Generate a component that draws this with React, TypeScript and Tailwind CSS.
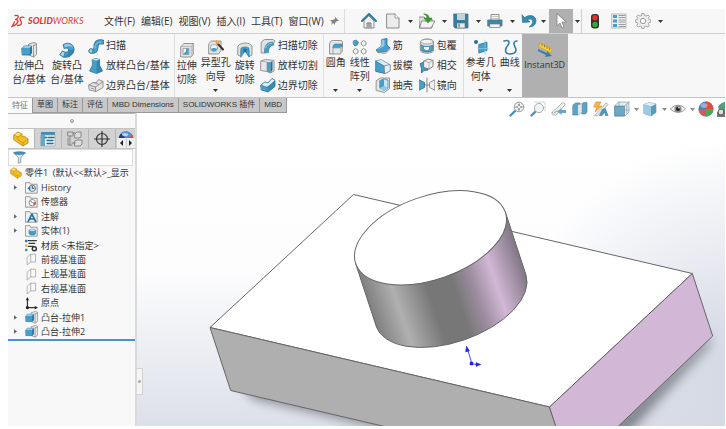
import type { ReactNode } from 'react'

function Icon({ children, size = 'size-4' }: { children: ReactNode; size?: string }) {
  return (
    <svg viewBox="0 0 16 16" className={`${size} shrink-0`} fill="none" strokeLinejoin="round" strokeLinecap="round" aria-hidden="true">
      {children}
    </svg>
  )
}

const B = '#459fc9'
const D = '#236f96'
const L = '#8fcbe6'
const G = '#dcdcdc'
const K = '#8a8a8a'

const icons = {
  extrude: <><path d="M8 2l5-1.500 2.500 1v11l-3 2.500L8 13z" fill="#e6e6e6" stroke={K} strokeWidth=".9" /><path d="M12.500 3.500V15M12.500 3.500l3-1" stroke={K} strokeWidth=".8" /><path d="M1 6l2-2h7.500v7L9 13H1.500z" fill={B} stroke={D} strokeWidth=".8" /><path d="M1 6l2-2h7.500L9 6z" fill={L} /><path d="M9 6l1.500-2v7L9 13z" fill={D} /></>,
  revolve: <><path d="M4.500 2.500C10-1 15.500 3 15 8s-5.500 8-10.500 7L1 12.500 3.500 9c3 2 6 1.500 6-1 0-2-2-2.500-4-1.500z" fill={B} stroke={D} strokeWidth=".9" /><path d="M5 3c4-2.500 8-.5 9 2.500-3-2-5-1.500-8 0z" fill={L} /><path d="M9.500 8c2 0 4 0 5.500 0-.5 4-5 7-10 6.500 3-1 5-3 4.500-6.500z" fill={D} opacity=".55" /><path d="M1 12.500L3.500 9l2.500 1.500L4.500 15z" fill="#a9d7ec" stroke={D} strokeWidth=".6" /></>,
  sweep: <><path d="M3 13c4 1 5-1 5-4s1-6 6-5" stroke={D} strokeWidth="5" /><path d="M3 13c4 1 5-1 5-4s1-6 6-5" stroke={B} strokeWidth="3.600" /><path d="M7 10c0-4 2-6 6-6" stroke={L} strokeWidth="1" /><ellipse cx="3" cy="13" rx="2" ry="2.200" fill="#a9d7ec" stroke={D} strokeWidth=".7" /></>,
  loft: <><path d="M4.500 1.500L8 .5l3.500 1v5.500l3 6L8.500 15.500 1.500 13l3-6z" fill={B} stroke={D} strokeWidth=".7" /><path d="M4.500 1.500L8 .5l3.500 1-3 1.200z" fill="#bfe3f2" /><path d="M8.500 3v12.500l6-2.500-3-6V1.500z" fill={D} opacity=".5" /></>,
  boundary: <><path d="M1 8l4-2.500 3 .5 2.500-3.500 4.500 2v6L8 14.500 1.500 13z" fill="#e4e4e4" stroke={K} strokeWidth=".9" /><path d="M1 8l6.500 2L15 4.500M7.500 10v4.500M5 5.500L8 6l2.500 1.500M3 11l3 1" stroke={K} strokeWidth=".9" /></>,
  cut: <><path d="M2 4.500L5 1.500h9.500V12L12 15H2z" fill="#e2e2e2" stroke={K} strokeWidth=".9" /><path d="M12 4.500V15l2.500-3V1.500z" fill="#c2c2c2" /><path d="M2 4.500h10l2.500-3" stroke="#aaa" strokeWidth=".7" /><rect x="4.500" y="6.500" width="5.500" height="6" fill="#fff" stroke={K} strokeWidth=".7" /><path d="M4.800 12.200V11L7 9.500V6.800h2.700v5.400z" fill={B} /></>,
  hole: <><path d="M1 4.500L3.500 2H13v9.500L10.500 15H1z" fill="#e2e2e2" stroke={K} strokeWidth=".9" /><circle cx="6" cy="9" r="3.600" fill="#eef7fb" stroke={K} strokeWidth=".6" /><path d="M2.800 10c2-1.500 4.400-1.500 6.400 0-1 3-5.400 3-6.400 0z" fill={B} /><path d="M9.500 4.500l5.500 6" stroke="#333" strokeWidth="2" /><path d="M7 3l1.500-2 1.200 1.500L12 2l-.8 2.200L9.500 5.500z" fill="#f0a43a" /></>,
  revcut: <><path d="M1 4c2-4 12-4 14 0v9l-3 1.500V8H4v6.500L1 13z" fill="#e2e2e2" stroke={K} strokeWidth=".9" /><path d="M4 6c2-1.500 6-1.500 8 0v9l-2.500-3.500V7h-3v4.500L4 15z" fill={B} stroke={D} strokeWidth=".5" /><path d="M6.500 7h3v4.500L8 10l-1.500 1.500z" fill={D} /></>,
  sweepcut: <><path d="M1.500 4l3-2.500H13l2 1.500-2 3-3.500 2L6 15H1.500z" fill="#e2e2e2" stroke={K} strokeWidth=".9" /><path d="M4.500 14c0-7 2.500-9.500 8-10l1.500 3c-4 .5-5.500 3-5.500 7.500z" fill={B} stroke={D} strokeWidth=".6" /><path d="M5.500 10c1-3 3-4.500 6.500-5" stroke={L} /></>,
  loftcut: <><path d="M1 3l4.500-1.500L14 2.500V13l-3.500 2-3.500-1.500L1 12.500z" fill="#e6e6e6" stroke={K} strokeWidth=".9" /><path d="M7 4h3.500v11L7 13.500z" fill={B} /><path d="M10.500 4l2-1v9l-2 3z" fill={D} /><path d="M1 3l6 1v9" stroke={K} strokeWidth=".6" /></>,
  boundcut: <><path d="M1 8l4-3 3 1 4-4.500 3 2v6L8 15l-6.500-2z" fill={B} stroke={D} strokeWidth=".8" /><path d="M1 8l4-3 3 1 4-4.500 3 2-5 4.500-3 2z" fill="#e4eff4" stroke={D} strokeWidth=".5" /><path d="M7.500 10v5L15 9.500v-6L10 8z" fill={D} opacity=".4" /></>,
  fillet: <><path d="M1.500 5.500c0-2.500 1.500-4 4-4h8l1 1.500v9.500L12 15H2z" fill="#e6e6e6" stroke={K} strokeWidth=".9" /><path d="M5 8.500c0-2 .5-3.500 2.500-3.500H14v3.500z" fill={B} stroke={D} strokeWidth=".5" /><path d="M5 8.500h7.500V15M5 8.500V15" stroke={K} strokeWidth=".7" /><path d="M12.500 8.500l2-1v5.200l-2.200 2z" fill="#c6c6c6" /></>,
  pattern: <><path d="M1.500 2L4 1l2.500 2-1 3-2.500 1-1.500-1.500z" fill={B} stroke={D} strokeWidth=".6" />{['M9.500 3l2-1.500L14 3v2.500L11.500 7l-2-1.500z', 'M1.500 11l2-1.500L6 11v2.500L3.500 15l-2-1.500z', 'M9.500 11l2-1.500L14 11v2.500L11.500 15l-2-1.500z'].map(d => <path key={d} d={d} fill="#f0f0f0" stroke={K} strokeWidth=".9" />)}</>,
  rib: <><path d="M7 1.500L12 .5V7l3 3-4 4-8 .5L1 12l5-3.500z" fill={B} stroke={D} strokeWidth=".8" /><path d="M7 1.500l2.500.5v6L3.500 11 1 12l5-3.500z" fill={L} /><path d="M3 14.500l8-.5 4-4v1.500L11 15.500z" fill={G} stroke={K} strokeWidth=".6" /></>,
  draft: <><path d="M1 3l8.500 4L15 6.500V13l-5 2.500L1 13.500z" fill={B} stroke={D} strokeWidth=".8" /><path d="M1 3l5-1.500 9 5L9.500 8z" fill="#dfebf0" stroke={D} strokeWidth=".5" /><path d="M9.500 8L15 6.500V13l-5 2.500z" fill="#eaf0f2" stroke={K} strokeWidth=".6" /></>,
  shell: <><path d="M1.500 3.500l4-2.500h9v10.500l-5 4-8-2z" fill="#e4e4e4" stroke={K} strokeWidth=".9" /><path d="M5 3.500L9 2l4 1v8l-4 2-4-2z" fill="#c5e5f2" stroke={D} strokeWidth=".6" /><path d="M9 2v7l4 2-4 3-4-3V3.500z" fill={B} /><path d="M9 9l4 2-4 3-4-3z" fill={L} /></>,
  wrap: <><path d="M1.500 3.500c1.500-3.500 11.500-3.500 13 0v9.500c-2 3-11 3-13 0z" fill={G} stroke={K} strokeWidth=".9" /><ellipse cx="8" cy="3.600" rx="6.300" ry="2.200" fill="#f4f4f4" stroke={K} strokeWidth=".6" /><path d="M2.500 7c3 2 8 2 11 0v5.500c-3 2-8 2-11 0z" fill={B} stroke={D} strokeWidth=".6" /><path d="M5 9h5v2c-1 1.500-3 1.500-5 0z" fill="#fff" /></>,
  intersect: <><path d="M1.500 5.500L5 4l4 3v5l-4 .5-2.500 2.500v-4z" fill={B} stroke={D} strokeWidth=".9" /><path d="M5 3l4-2 5 1.500v6L10 11 5 9.500z" fill="#f2f2f2" stroke="#777" strokeWidth=".9" /><path d="M5 3l5 1.500 4-2M10 4.500V11" stroke={K} strokeWidth=".6" /></>,
  mirror: <><path d="M.5 3l5 2.500v5l-5 2.500z" fill={B} stroke={D} strokeWidth=".8" /><path d="M5.500 8h5M8 1v14" stroke="#777" strokeWidth=".9" /><path d="M15.500 3l-5 2.500v5l5 2.500z" fill="#eee" stroke={K} strokeWidth=".9" /></>,
  refgeo: <><circle cx="3" cy="3" r="2" fill={D} /><path d="M6 5.500L14 3v8.500L6 14z" fill={B} stroke={D} strokeWidth=".7" /><path d="M12 1v14M5 9.500h10" stroke={L} strokeWidth=".7" /></>,
  curve: <path d="M2 2c5-1.500 6 1 4 4-4 5-3 9 2 9 6 0 7-4 5-7-2-4-1-6 2-6" stroke="#337fa9" strokeWidth="1.600" />,
  instant: <><path d="M3 1l12 6-1 4L2 5z" fill="#f7cf38" stroke="#c79b20" strokeWidth=".6" /><path d="M5 2v2M7.500 3v2M10 4.500v2M12.500 6v2" stroke="#8d6b11" strokeWidth=".7" /><path d="M1 7l9 4V9l5 5-7 1 1-2-8-4z" fill="#337fb0" /></>,
  home: <><path d="M3 8v7h10V8L8 3z" fill="#f2f2f2" stroke="#777" strokeWidth=".8" /><path d="M6 15v-5h4v5M8 10v5" fill="#ccc" stroke="#777" strokeWidth=".9" /><path d="M1 8l7-7 7 7" stroke="#2a79a0" strokeWidth="2" /></>,
  doc: <><path d="M2 1h8l4 4v10H2z" fill="#ececec" stroke="#8b8b8b" /><path d="M10 1v4h4" fill="#fff" stroke="#8b8b8b" strokeWidth=".8" /></>,
  open: <><path d="M0 4h5l2 2h6v9H1z" fill="#ddd" stroke="#777" strokeWidth=".8" /><path d="M3 8h13l-4 7H1z" fill="#f3f3f3" stroke="#777" strokeWidth=".8" /><path d="M5 1c4 0 5 2 5 4h3l-4 5-4-5h3c0-2-1-3-3-4z" fill="#3b9b2b" stroke="#237618" strokeWidth=".5" /></>,
  save: <><path d="M1 1h14v14H2l-1-1z" fill="#347f9f" stroke="#536e7a" strokeWidth=".8" /><path d="M4 1h8v6H4z" fill="#c5d3d9" /><path d="M4 10h8v5H4z" fill="#e7e7e7" stroke="#566" strokeWidth=".5" /><path d="M6 11v3" stroke="#456" /></>,
  print: <><path d="M4 7V1.500h8V7" fill="#f6f6f6" stroke="#777" strokeWidth=".8" /><path d="M1 7h14v6H1z" fill="#348cad" stroke="#566f7a" strokeWidth=".8" /><path d="M3 11h10v3.500H3z" fill="#f5f5f5" stroke="#777" strokeWidth=".7" /><path d="M5 3.500h6M5 5.500h6" stroke="#aaa" strokeWidth=".6" /></>,
  undo: <path d="M1 2l.5 7.500L9 9 6.500 6.800C10 5 12 7 11.500 9.500c-.3 1.800-1.500 3-3.500 4.500 4.500 0 7-2.500 7-6.500C15 3 9 .5 3.800 4.500z" fill="#348caf" stroke="#216f91" strokeWidth=".6" />,
  cursor: <path d="M4 1v12l3-3 2 5 2-1-2-5h4z" fill="#fff" stroke="#838383" strokeWidth=".8" />,
  light: <><rect x="4" y="1" width="8" height="14.500" rx="3" fill="#343434" /><circle cx="8" cy="4.800" r="2.700" fill="#e93025" /><circle cx="8" cy="11.500" r="2.700" fill="#36a93a" /></>,
  list: <><path d="M1 1h14v14H1z" fill="#eee" stroke="#999" strokeWidth=".6" /><path d="M2 2h4v3H2zM2 6.500h4v3H2zM2 11h4v3H2z" fill={B} /><path d="M8 2.500h6M8 4.500h6M8 7h6M8 9h6M8 11.500h6M8 13.500h6" stroke="#888" strokeWidth=".8" /></>,
  gear: <><path d="M7 .5h2l.5 2 1.500.6L13 2l1.400 1.500-1.100 1.800.6 1.200 2 .5v2l-2 .5-.6 1.300 1.100 1.800-1.500 1.400-1.800-1-1.600.6L9 15.500H7l-.5-1.900-1.400-.6-1.900 1-1.500-1.400 1.100-1.800L2.200 9.500l-2-.5V7l2-.5.6-1.200L1.700 3.500 3.200 2l1.900 1.100L6.500 2.500z" fill="#eee" stroke="#9a9a9a" strokeWidth=".9" /><circle cx="8" cy="8" r="2.700" fill="#fff" stroke="#9a9a9a" /></>,
  zoomfit: <><path d="M1.500 14.500L6 10" stroke="#4c90b8" strokeWidth="2.400" /><circle cx="10" cy="6" r="4.800" fill="#eef1f2" stroke="#9a9a9a" /><path d="M10 3v1.500M10 7.500V9M7 6h1.500M11.500 6H13" stroke="#666" strokeWidth="1.200" /></>,
  zoomarea: <><path d="M1.500 14.500L5.500 10.500" stroke="#4c90b8" strokeWidth="2.400" /><circle cx="9" cy="7" r="4.600" fill="#eef4f6" stroke="#adadad" /><path d="M5 1h10v9" stroke="#bbb" strokeWidth=".8" strokeDasharray="2 1.500" /></>,
  prev: <><path d="M1 12c0-2 3-3 5-5l5-5c2-1 4 1 2 3l-6 7c-2 3-6 3-6 0z" fill="#f0f0f0" stroke="#aaa" strokeWidth=".9" /><path d="M3 12l3-2" stroke="#999" /><path d="M6 10.500L10.500 7v2H15v3h-4.500v2z" fill="#6aa6c4" /></>,
  section: <><path d="M1 4l2.500-2H8v9.500L6 14H1z" fill="#5da3c4" stroke="#4a7f9a" strokeWidth=".6" /><path d="M10 3l1.500-1.500H15V11l-1.500 2H10z" fill="#5da3c4" stroke="#4a7f9a" strokeWidth=".6" /><path d="M6 4l4-1.500v9L6 14z" fill="#e3e8ea" stroke="#999" strokeWidth=".5" /></>,
  annview: <><path d="M3 1h5L5.500 5H9l-7 6 2-5H1z" fill="#f8b743" stroke="#e08a3a" strokeWidth=".7" /><path d="M13.500 2L15 3.500 4.500 15 2 14.500z" fill="#e6e6e6" stroke="#999" strokeWidth=".7" /><path d="M9 8l3.500-1L15.500 15h-3L11.500 12 9 15H6z" fill="#5096b9" /></>,
  orient: <><path d="M1 4.500L4.500 1H15v10l-4 4H1z" fill="#e3edf1" stroke="#8c9aa0" strokeWidth=".7" /><path d="M1 5h9.500v10H1z" fill="#69a9c5" stroke="#4a7f9a" strokeWidth=".6" /><path d="M10.500 5L15 1M5 1v4M12.800 3v9M10.500 9H15" stroke="#8c9aa0" strokeWidth=".7" /></>,
  cube: <><path d="M2 3.500L7 1.500l7 1.500v8.500L9 15l-7-2.500z" fill="#559dc0" stroke="#7b929c" strokeWidth=".6" /><path d="M2 3.500l5-2L14 3 9 5.500z" fill="#e1ebef" /><path d="M2 3.500l7 2V15l-7-2.500z" fill="#9bcbe0" /></>,
  eye: <><path d="M.5 8c4-5 11-5 15 0-4 4.500-11 4.500-15 0z" fill="#f5f5f5" stroke="#999" /><circle cx="8" cy="8" r="3.600" fill="#8a8a8a" /><circle cx="8" cy="8" r="2" fill="#222" /><circle cx="9" cy="6.800" r=".8" fill="#fff" /></>,
  ball: <><circle cx="8" cy="8" r="7.500" fill="#427cbd" /><path d="M8 8V.5A7.500 7.500 0 0 1 15.500 8z" fill="#dd4c43" /><path d="M8 8H.5A7.500 7.500 0 0 0 8 15.500z" fill="#d45a5e" /><path d="M8 8h7.500A7.500 7.500 0 0 1 8 15.500z" fill="#4aa955" /><ellipse cx="6" cy="4.500" rx="3.500" ry="2.500" fill="#fff" opacity=".4" /></>,
  scene: <><path d="M2 6c3-6 10-6 14-3v9H5z" fill="#579f78" /><path d="M1 11h12v5H1z" fill="#777" /><circle cx="5" cy="11" r="3" fill="#ddd" stroke="#555" /></>,
  part: <><path d="M1 4l4-3 4 2v3l2-1 4 3v4l-5 3-9-6z" fill="#f4bf24" stroke="#b58a1c" strokeWidth=".8" /><path d="M1 4l4 2 4-3M5 6v3l5 3 5-4M10 12v3" stroke="#c38d13" strokeWidth=".7" /><path d="M2 4l3-2 3 1-3 2z" fill="#ffe77b" /></>,
  props: <><path d="M1 1h14v3H1z" fill="#3e8fb6" /><path d="M1 4h14v11H1z" fill="#edf2f4" stroke="#8fa7b2" strokeWidth=".7" /><path d="M1 4h4v11H1z" fill="#62a9c9" /><path d="M5 6.500h2M8.500 6.500H14M7 9.500h6M7 12.500h6" stroke="#256e95" strokeWidth="1.300" /></>,
  config: <><path d="M1 1h5v4H1zM1 7v7h4M3 5v9" stroke="#808080" strokeWidth=".9" /><path d="M8 3l2-2h4v5l-2 1H8zM8 10l2-1h5v4l-2 2H8z" fill="#ddd" stroke="#777" strokeWidth=".8" /><path d="M6 2h2M5 12h3" stroke="#777" /></>,
  target: <><circle cx="8" cy="8" r="5.500" stroke="#333" strokeWidth="1.200" /><path d="M8 .5v15M.5 8h15" stroke="#333" strokeWidth="1.200" /></>,
  appear: <><circle cx="8" cy="8" r="7.500" fill="#263e78" /><path d="M8 8L3 2c4-3 9-2 12 3z" fill="#5b91cc" /><path d="M8 8l7-4v9z" fill="#e04b3c" /><ellipse cx="7" cy="3.500" rx="3" ry="1.500" fill="#fff" opacity=".6" /></>,
  filter: <><path d="M1 2h14L9.500 8.500V14l-3 1V8.500z" fill="#dceaf0" stroke="#687a83" strokeWidth=".8" /><ellipse cx="8" cy="2.500" rx="7" ry="2" fill="#3f8eb5" stroke="#4c7f99" strokeWidth=".5" /></>,
  history: <><path d="M1 2h5l1 2h8v11H1z" fill="#f3f3f3" stroke="#777" strokeWidth=".9" /><circle cx="9" cy="9" r="4" fill="#d4e5ee" stroke="#45738d" /><path d="M9 6.500V9h2" stroke="#333" /><path d="M3 9l3.500-3v6z" fill="#2d78a0" /></>,
  sensor: <><path d="M1 2h5l1 2h8v11H1z" fill="#f3f3f3" stroke="#777" strokeWidth=".9" /><circle cx="9" cy="9.500" r="4" fill="#fff" stroke="#777" /><path d="M9 9.500l-2-2" stroke="#444" /><path d="M10 9h3v3h-3z" fill="#d8544b" /></>,
  note: <><path d="M1 2h5l1 2h8v11H1z" fill="#e9f0f3" stroke="#777" strokeWidth=".9" /><path d="M4 14L8.500 5 13 14M6 11h5" stroke="#236d9b" strokeWidth="2" /></>,
  bodies: <><path d="M1 2h5l1 2h8v11H1z" fill="#f3f3f3" stroke="#777" strokeWidth=".9" /><path d="M5 7.500C6 6 12 6 13 7.500V12c-1 2-7 2-8 0z" fill={B} stroke={D} strokeWidth=".7" /><ellipse cx="9" cy="7.600" rx="3.500" ry="1.100" fill="#c5e6f4" /></>,
  material: <><path d="M4 2h10M5 5.500h8" stroke="#333" strokeWidth="1.500" strokeDasharray="3 1" /><path d="M0 1h3v3H0z" fill="#337eaa" /><path d="M0 6.500h3v3H0z" fill="#efbc35" /><path d="M0 12h3v3H0z" fill="#458eaf" /><path d="M4 9h7" stroke="#333" strokeWidth="1.500" /><circle cx="11.500" cy="12" r="2.500" stroke="#333" strokeWidth="1.800" /></>,
  plane: <path d="M3 5l4-3.500V11l-4 3.500zM7 1.500h6V11H7" fill="#fafafa" stroke="#9a9a9a" strokeWidth=".9" />,
  origin: <><path d="M3 2v11h11" stroke="#333" strokeWidth="1.500" /><path d="M1 4l2-4 2 4zM12 11l4 2-4 2z" fill="#222" /><circle cx="3" cy="13" r="2" fill="#222" /></>,
}

type IconName = keyof typeof icons

const menus = ['文件(F)', '编辑(E)', '视图(V)', '插入(I)', '工具(T)', '窗口(W)']

const quickTools: { icon: IconName; label: string }[] = [
  { icon: 'doc', label: '新建' },
  { icon: 'open', label: '打开' },
  { icon: 'save', label: '保存' },
  { icon: 'print', label: '打印' },
]

const tabs = ['特征', '草图', '标注', '评估', 'MBD Dimensions', 'SOLIDWORKS 插件', 'MBD']

const panelTabs: { icon: IconName; label: string }[] = [
  { icon: 'part', label: '设计树' },
  { icon: 'props', label: '属性' },
  { icon: 'config', label: '配置' },
  { icon: 'target', label: '尺寸' },
]

const tree: { icon: IconName; label: string; open?: boolean }[] = [
  { icon: 'history', label: 'History', open: true },
  { icon: 'sensor', label: '传感器' },
  { icon: 'note', label: '注解', open: true },
  { icon: 'bodies', label: '实体(1)', open: true },
  { icon: 'material', label: '材质 <未指定>' },
  { icon: 'plane', label: '前视基准面' },
  { icon: 'plane', label: '上视基准面' },
  { icon: 'plane', label: '右视基准面' },
  { icon: 'origin', label: '原点' },
  { icon: 'extrude', label: '凸台-拉伸1', open: true },
  { icon: 'extrude', label: '凸台-拉伸2', open: true },
]

const viewTools: { icon: IconName; label: string; menu?: boolean }[] = [
  { icon: 'zoomfit', label: '整屏显示' },
  { icon: 'zoomarea', label: '局部放大' },
  { icon: 'prev', label: '上一视图' },
  { icon: 'section', label: '剖面视图' },
  { icon: 'annview', label: '动态注解' },
  { icon: 'orient', label: '视图定向', menu: true },
  { icon: 'cube', label: '显示样式', menu: true },
  { icon: 'eye', label: '隐藏/显示', menu: true },
  { icon: 'ball', label: '编辑外观' },
  { icon: 'scene', label: '应用布景' },
]

function Caret() {
  return (
    <svg viewBox="0 0 5 3" className="w-[5px] h-[3px] shrink-0" aria-hidden="true">
      <path d="M0 0h5L2.500 3z" fill="currentColor" />
    </svg>
  )
}

function IconButton({ icon, label }: { icon: IconName; label: string }) {
  return (
    <button aria-label={label} className="shrink-0">
      <Icon>{icons[icon]}</Icon>
    </button>
  )
}

function CaretButton({ label, width }: { label: string; width: string }) {
  return (
    <button aria-label={`${label}选项`} className={`${width} h-4 shrink-0 flex items-center justify-center`}>
      <Caret />
    </button>
  )
}

function BigButton({ icon, lines, width, menu }: { icon: IconName; lines: string[]; width: string; menu?: boolean }) {
  return (
    <button className={`${width} ${menu ? 'pt-[5px]' : 'pt-2'} relative shrink-0 flex flex-col items-center leading-[14px] whitespace-nowrap`}>
      <Icon>{icons[icon]}</Icon>
      {lines.map(l => <span key={l}>{l}</span>)}
      {menu && <span className="absolute bottom-[5px]"><Caret /></span>}
    </button>
  )
}

function SmallList({ items, pad }: { items: [IconName, string][]; pad: string }) {
  return (
    <div className={`${pad} flex flex-col justify-between py-[2px] shrink-0`}>
      {items.map(([icon, label]) => (
        <button key={label} className="h-5 flex items-center gap-[2px] whitespace-nowrap">
          <Icon>{icons[icon]}</Icon>
          {label}
        </button>
      ))}
    </div>
  )
}

function TitleBar() {
  return (
    <header className="h-[25px] flex items-center bg-[#f7f7f7] border-b border-[#cfcfcf]">
      <div className="w-[337px] h-full shrink-0 flex items-center border-r border-[#dedede] pr-1">
        <div className="w-24 pl-[3px] flex items-center gap-[3px] text-[#dc3b38] text-[9px] italic">
          <svg viewBox="0 0 14 14" className="w-[14px] h-[14px]" fill="none" stroke="#dc3b38" strokeWidth="1.300" strokeLinecap="round" aria-hidden="true">
            <path d="M4 1.500c4-.5 4.500 1.500 1 4M4.500 5.500C9 5.500 7 10.500 1 12.500l2.500-4.500M13 3.500c-3-1-5 .8-3.500 3s1.500 5-3 5" />
          </svg>
          <span className="font-['Lato',sans-serif]"><b className="font-black">SOLID</b>WORKS</span>
        </div>
        <nav className="flex gap-[6px]">
          {menus.map(m => <button key={m} className="whitespace-nowrap">{m}</button>)}
        </nav>
        <button aria-label="固定菜单" className="ml-auto">
          <svg viewBox="0 0 10 10" className="size-[10px]" aria-hidden="true">
            <path d="M5 1l4 4-2 0-2 2 0 2-2-2-2 2 1-3-2-2 3 0 2-1z" fill="#808080" />
          </svg>
        </button>
      </div>
      <div className="pl-4 h-full flex items-center">
        <IconButton icon="home" label="主页" />
        <div className="w-2" />
        {quickTools.map(t => (
          <div key={t.label} className="flex">
            <IconButton icon={t.icon} label={t.label} />
            <CaretButton label={t.label} width="w-[18px]" />
          </div>
        ))}
        <IconButton icon="undo" label="撤销" />
        <CaretButton label="撤销" width="w-3" />
        <button aria-label="选择" className="w-6 h-full flex items-center justify-center bg-[#b0b0b0]">
          <Icon>{icons.cursor}</Icon>
        </button>
        <div className="h-full flex items-center border-r border-[#d0d0d0]">
          <CaretButton label="选择" width="w-2" />
        </div>
        <div className="pl-[5px] flex items-center gap-2">
          <IconButton icon="light" label="重建模型" />
          <IconButton icon="list" label="文件属性" />
          <IconButton icon="gear" label="选项" />
        </div>
        <CaretButton label="选项" width="w-[18px]" />
      </div>
    </header>
  )
}

function Ribbon() {
  return (
    <div className="h-16 flex bg-[#f7f7f7] border-b border-[#c4c4c4]">
      <div className="flex pl-[2px] border-r border-[#dedede]">
        <BigButton icon="extrude" lines={['拉伸凸', '台/基体']} width="w-[38px]" />
        <BigButton icon="revolve" lines={['旋转凸', '台/基体']} width="w-[38px]" />
        <SmallList pad="pl-[2px] pr-1" items={[['sweep', '扫描'], ['loft', '放样凸台/基体'], ['boundary', '边界凸台/基体']]} />
      </div>
      <div className="flex border-r border-[#dedede]">
        <BigButton icon="cut" lines={['拉伸', '切除']} width="w-6" />
        <BigButton icon="hole" lines={['异型孔', '向导']} width="w-[34px]" menu />
        <BigButton icon="revcut" lines={['旋转', '切除']} width="w-6" />
        <SmallList pad="pl-[3px] pr-[5px]" items={[['sweepcut', '扫描切除'], ['loftcut', '放样切割'], ['boundcut', '边界切除']]} />
      </div>
      <div className="flex border-r border-[#dedede]">
        <BigButton icon="fillet" lines={['圆角']} width="w-6" menu />
        <BigButton icon="pattern" lines={['线性', '阵列']} width="w-6" menu />
        <SmallList pad="pl-[3px] pr-[6px]" items={[['rib', '筋'], ['draft', '拔模'], ['shell', '抽壳']]} />
        <SmallList pad="pr-[6px]" items={[['wrap', '包覆'], ['intersect', '相交'], ['mirror', '镜向']]} />
      </div>
      <BigButton icon="refgeo" lines={['参考几', '何体']} width="w-[34px]" menu />
      <BigButton icon="curve" lines={['曲线']} width="w-6" menu />
      <div className="flex bg-[#b0b0b0] text-[9px]">
        <BigButton icon="instant" lines={['Instant3D']} width="w-[46px]" />
      </div>
    </div>
  )
}

function FeaturePanel() {
  return (
    <aside className="w-[129px] shrink-0 flex flex-col bg-[#f8f8f8] border-r-2 border-[#dadada] text-[9px]">
      <div className="h-[15px] flex items-center justify-center border-t border-[#b8b8b8]">
        <span className="size-1 rounded-full border border-[#999] bg-[#ddd]" />
      </div>
      <div className="h-[21px] flex bg-[#d2d2d2] border-y border-[#c2c2c2]">
        {panelTabs.map((t, i) => (
          <button key={t.label} aria-label={t.label} className={`w-[27px] shrink-0 flex items-center justify-center border-r border-[#b5b5b5] ${i === 0 ? 'bg-[#fafafa]' : ''}`}>
            <Icon>{icons[t.icon]}</Icon>
          </button>
        ))}
        <div className="relative flex-1 flex justify-center overflow-hidden">
          <IconButton icon="appear" label="外观" />
          <div className="absolute bottom-0 inset-x-0 h-[10px] flex text-[#222]">
            {['M4 0v6L1 3z', 'M1 0v6l3-3z'].map((d, i) => (
              <button key={d} aria-label={i ? '向右' : '向左'} className="flex-1 flex items-center justify-center bg-[#eee] border-l border-[#ccc]">
                <svg viewBox="0 0 5 6" className="w-[5px] h-[6px]" aria-hidden="true"><path d={d} fill="currentColor" /></svg>
              </button>
            ))}
          </div>
        </div>
      </div>
      <label className="h-[17px] mr-[2px] pl-1 flex items-center bg-white border border-[#dcdcdc]">
        <Icon size="size-[13px]">{icons.filter}</Icon>
        <input type="text" aria-label="过滤器" className="flex-1 min-w-0 outline-none" />
      </label>
      <ul className="h-[175px] flex flex-col justify-between border-b-2 border-[#4d92cf] overflow-hidden whitespace-nowrap">
        <li className="h-[14px] pl-[2px]">
          <button className="flex items-center gap-[3px]">
            <Icon size="size-3">{icons.part}</Icon>
            <span>零件1&nbsp; (默认&lt;&lt;默认&gt;_显示</span>
          </button>
        </li>
        {tree.map(n => (
          <li key={n.label} className="h-[14px] flex items-center">
            <span className="w-[17px] pl-[6px] shrink-0">
              {n.open && <svg viewBox="0 0 4 6" className="w-[3px] h-[5px]" aria-hidden="true"><path d="M0 0l4 3-4 3z" fill="#666" /></svg>}
            </span>
            <button className="flex items-center gap-[3px]">
              <Icon size="size-[13px]">{icons[n.icon]}</Icon>
              {n.label}
            </button>
          </li>
        ))}
      </ul>
    </aside>
  )
}

function Model() {
  return (
    <svg viewBox="137 113 588 313" preserveAspectRatio="xMidYMid slice" className="absolute inset-0 w-full h-full" role="img" aria-label="零件1">
      <defs>
        <linearGradient id="sky" x1="0" y1="0" x2="0" y2="1">
          <stop offset="0" stopColor="#fff" />
          <stop offset=".5" stopColor="#fdfdfe" />
          <stop offset="1" stopColor="#dce0e9" />
        </linearGradient>
        <radialGradient id="corner" gradientUnits="userSpaceOnUse" cx="740" cy="370" r="230">
          <stop offset="0" stopColor="#d3d8e3" />
          <stop offset="1" stopColor="#d3d8e3" stopOpacity="0" />
        </radialGradient>
        <linearGradient id="side" gradientUnits="userSpaceOnUse" x1="366" y1="294.600" x2="515.900" y2="243.400">
          <stop offset="0" stopColor="#808080" />
          <stop offset=".17" stopColor="#b0b0b0" />
          <stop offset=".38" stopColor="#777" />
          <stop offset=".54" stopColor="#777" />
          <stop offset=".66" stopColor="#9b8c9e" />
          <stop offset=".8" stopColor="#d2b8d6" />
          <stop offset="1" stopColor="#807684" />
        </linearGradient>
        <filter id="soft" x="-10%" y="-10%" width="120%" height="120%">
          <feGaussianBlur stdDeviation="6" />
        </filter>
      </defs>
      <path d="M137 113h588v313H137z" fill="url(#sky)" />
      <path d="M137 113h588v313H137z" fill="url(#corner)" />
      <path d="M240 380L572 460 708 336 710 344 590 475 252 398z" fill="#6d7178" opacity=".85" filter="url(#soft)" />
      <g stroke="#666" strokeWidth="1" strokeLinejoin="round">
        <path d="M353.500 194.500L692.300 273.500 549.500 407 210 327.500z" fill="#fff" />
        <path d="M210 327.500L549.500 407 570.500 470 230.700 390.500z" fill="#afafaf" />
        <path d="M692.300 273.500L712.700 336 570.500 472 549.500 407z" fill="#d2b8d6" />
        <path d="M355.600 263.400L376.100 325.900A79.100 41.700 -19.100 0 0 525.900 274.700L505.400 212.200z" fill="url(#side)" />
        <ellipse cx="430.500" cy="237.800" rx="79.100" ry="41.700" transform="rotate(-19.100 430.500 237.800)" fill="#fff" />
      </g>
      <g stroke="#2222e8" fill="#2222e8">
        <path d="M467.500 349l4.500 15 7 .5" fill="none" strokeWidth=".8" />
        <path d="M466.500 346l3 5-4 1zM481 364.500l-5 2v-4zM470 362h3v3h-3z" strokeWidth=".4" />
      </g>
    </svg>
  )
}

function Viewport() {
  return (
    <main className="relative flex-1">
      <Model />
      <div className="absolute right-0 -top-3 w-[216px] flex overflow-hidden text-[#888]">
        {viewTools.map((t, i) => (
          <div key={t.label} className={`flex shrink-0 ${i < 5 ? 'mr-[5px]' : i === 8 ? 'mr-[2px]' : ''}`}>
            <IconButton icon={t.icon} label={t.label} />
            {t.menu && <CaretButton label={t.label} width="w-[12px]" />}
          </div>
        ))}
      </div>
      <button aria-label="折叠面板" className="absolute left-0 bottom-[31px] w-[6px] h-[27px] flex items-center justify-center bg-[#f5f5f5] border border-l-0 border-[#d2d2d2]">
        <span className="size-[3px] rounded-full bg-[#aaa]" />
      </button>
    </main>
  )
}

export default function App() {
  return (
    <div className="min-h-screen flex flex-col bg-white pt-[9px] pl-2 pr-px pb-[3px] overflow-hidden text-[10px] text-[#333] font-['Open_Sans','Noto_Sans_CJK_SC',sans-serif]">
      <TitleBar />
      <Ribbon />
      <div className="h-[15px] flex text-[8px] font-['Liberation_Sans','Noto_Sans_CJK_SC',sans-serif]">
        {tabs.map((t, i) => (
          <button key={t} className={`px-1 whitespace-nowrap border-r border-[#999] ${i === 0 ? 'bg-[#fafafa] text-[#777]' : 'bg-[#c8c8c8] border-b'}`}>
            {t}
          </button>
        ))}
      </div>
      <div className="flex-1 flex">
        <FeaturePanel />
        <Viewport />
      </div>
    </div>
  )
}
